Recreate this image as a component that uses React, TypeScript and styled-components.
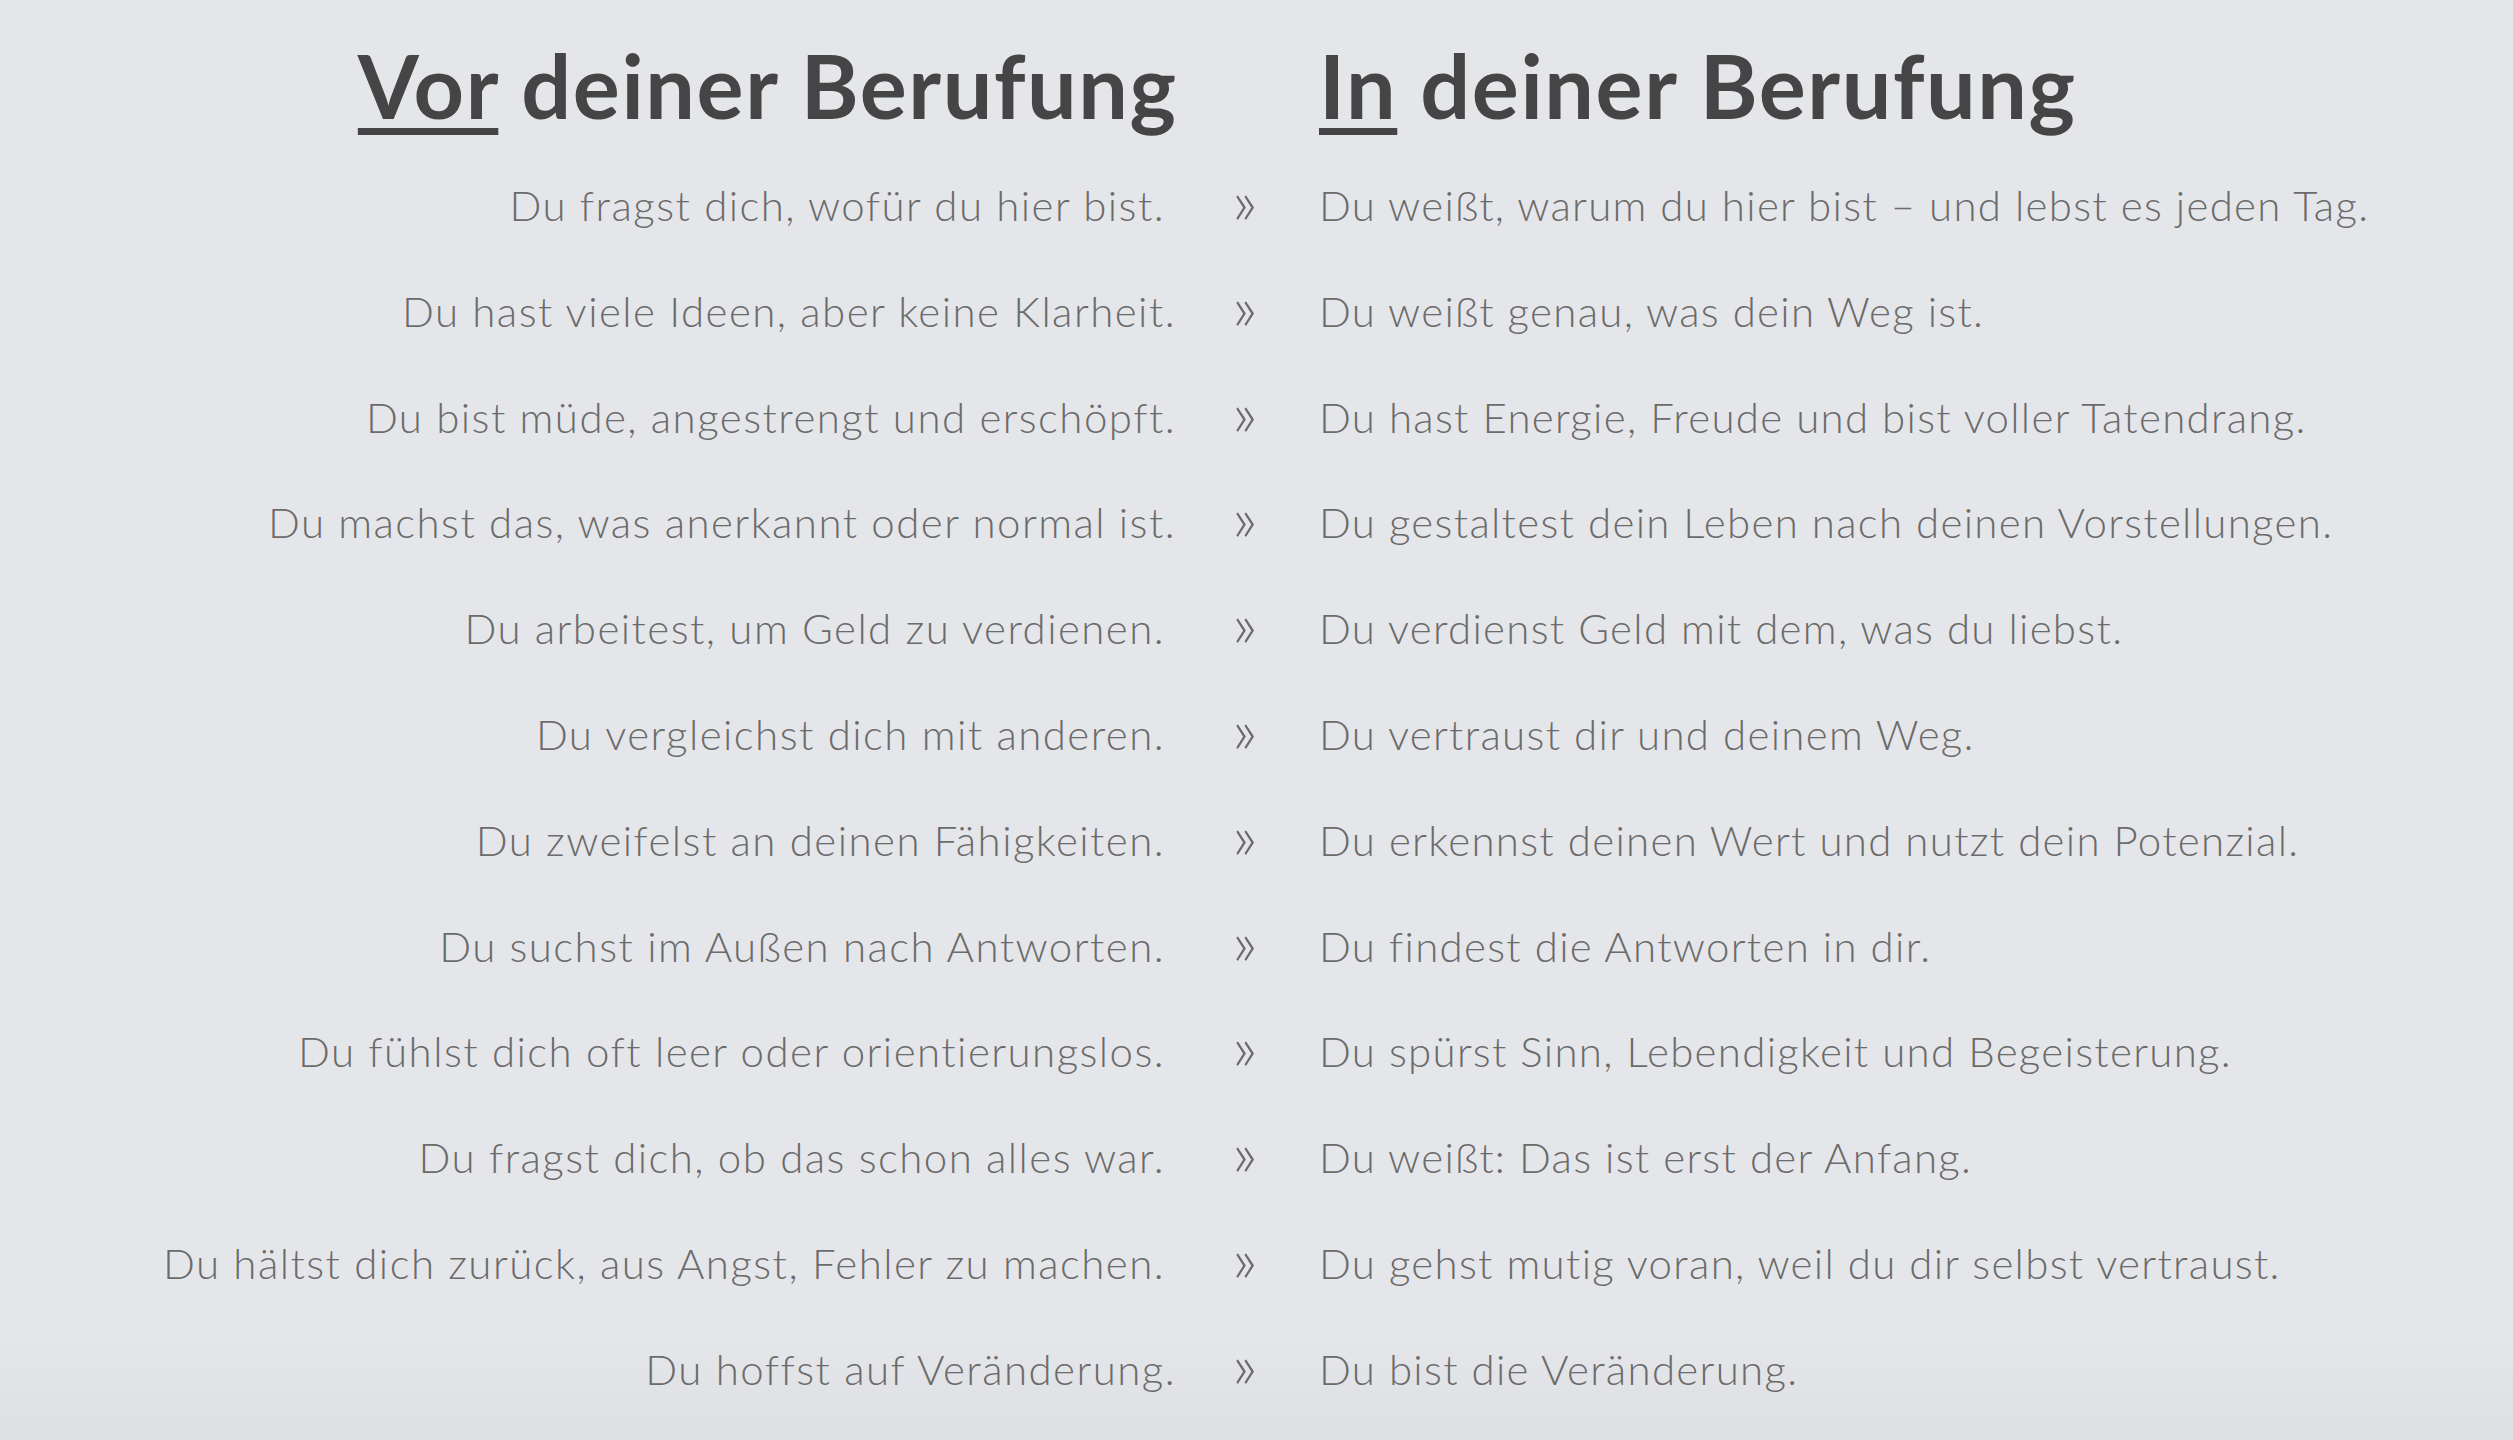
import React from "react";
import styled, { createGlobalStyle } from "styled-components";

const GlobalStyle = createGlobalStyle`
  html, body {
    margin: 0;
    padding: 0;
    background: #e5e6ea;
  }
  * { box-sizing: border-box; }
`;

const Page = styled.main`
  min-height: 1440px;
  background: linear-gradient(to bottom, #e5e6ea 0%, #e5e6ea 93%, #dedfe2 100%);
  padding-top: 30px;
  font-family: Lato, "Open Sans", "Liberation Sans", sans-serif;
`;

const Table = styled.div`
  display: grid;
  grid-template-columns: 1176px 143px 1fr;
  align-items: center;
`;

const Heading = styled.h2<{ $side: "left" | "right" }>`
  margin: 0 0 13px;
  font-family: Lato, "Liberation Sans", sans-serif;
  font-weight: 700;
  font-size: 88px;
  line-height: 110px;
  letter-spacing: 1.6px;
  color: #454545;
  text-align: ${(p) => (p.$side === "left" ? "right" : "left")};
  grid-column: ${(p) => (p.$side === "left" ? "1" : "3")};
  margin-right: ${(p) => (p.$side === "left" ? "-1.6px" : "0")};
`;

const Mark = styled.span`
  text-decoration: underline;
  text-decoration-thickness: 7px;
  text-underline-offset: 9px;
`;

const Spacer = styled.div`
  grid-column: 2;
`;

const Cell = styled.div<{ $side: "left" | "right"; $trail?: boolean }>`
  font-weight: 300;
  font-size: 42px;
  line-height: 105.8px;
  letter-spacing: ${(p) => (p.$side === "left" ? "1.45px" : "1.3px")};
  color: #6b6b6b;
  white-space: nowrap;
  text-align: ${(p) => (p.$side === "left" ? "right" : "left")};
  padding-right: ${(p) => (p.$side === "left" && p.$trail ? "11px" : "0")};
`;

const Arrow = styled.div`
  font-weight: 300;
  font-size: 64px;
  line-height: 93.8px;
  color: #6b6b6b;
  padding-left: 56px;
  padding-bottom: 12px;
`;

type Row = { before: string; after: string; trail?: boolean };

const rows: Row[] = [
  { before: "Du fragst dich, wofür du hier bist.", after: "Du weißt, warum du hier bist – und lebst es jeden Tag.", trail: true },
  { before: "Du hast viele Ideen, aber keine Klarheit.", after: "Du weißt genau, was dein Weg ist." },
  { before: "Du bist müde, angestrengt und erschöpft.", after: "Du hast Energie, Freude und bist voller Tatendrang." },
  { before: "Du machst das, was anerkannt oder normal ist.", after: "Du gestaltest dein Leben nach deinen Vorstellungen." },
  { before: "Du arbeitest, um Geld zu verdienen.", after: "Du verdienst Geld mit dem, was du liebst.", trail: true },
  { before: "Du vergleichst dich mit anderen.", after: "Du vertraust dir und deinem Weg.", trail: true },
  { before: "Du zweifelst an deinen Fähigkeiten.", after: "Du erkennst deinen Wert und nutzt dein Potenzial.", trail: true },
  { before: "Du suchst im Außen nach Antworten.", after: "Du findest die Antworten in dir.", trail: true },
  { before: "Du fühlst dich oft leer oder orientierungslos.", after: "Du spürst Sinn, Lebendigkeit und Begeisterung.", trail: true },
  { before: "Du fragst dich, ob das schon alles war.", after: "Du weißt: Das ist erst der Anfang.", trail: true },
  { before: "Du hältst dich zurück, aus Angst, Fehler zu machen.", after: "Du gehst mutig voran, weil du dir selbst vertraust.", trail: true },
  { before: "Du hoffst auf Veränderung.", after: "Du bist die Veränderung." },
];

export default function App() {
  return (
    <>
      <GlobalStyle />
      <Page>
        <Table>
          <Heading $side="left">
            <Mark>Vor</Mark> deiner Berufung
          </Heading>
          <Spacer />
          <Heading $side="right">
            <Mark>In</Mark> deiner Berufung
          </Heading>
          {rows.map((r, i) => (
            <React.Fragment key={i}>
              <Cell $side="left" $trail={r.trail}>{r.before}</Cell>
              <Arrow>»</Arrow>
              <Cell $side="right">{r.after}</Cell>
            </React.Fragment>
          ))}
        </Table>
      </Page>
    </>
  );
}
